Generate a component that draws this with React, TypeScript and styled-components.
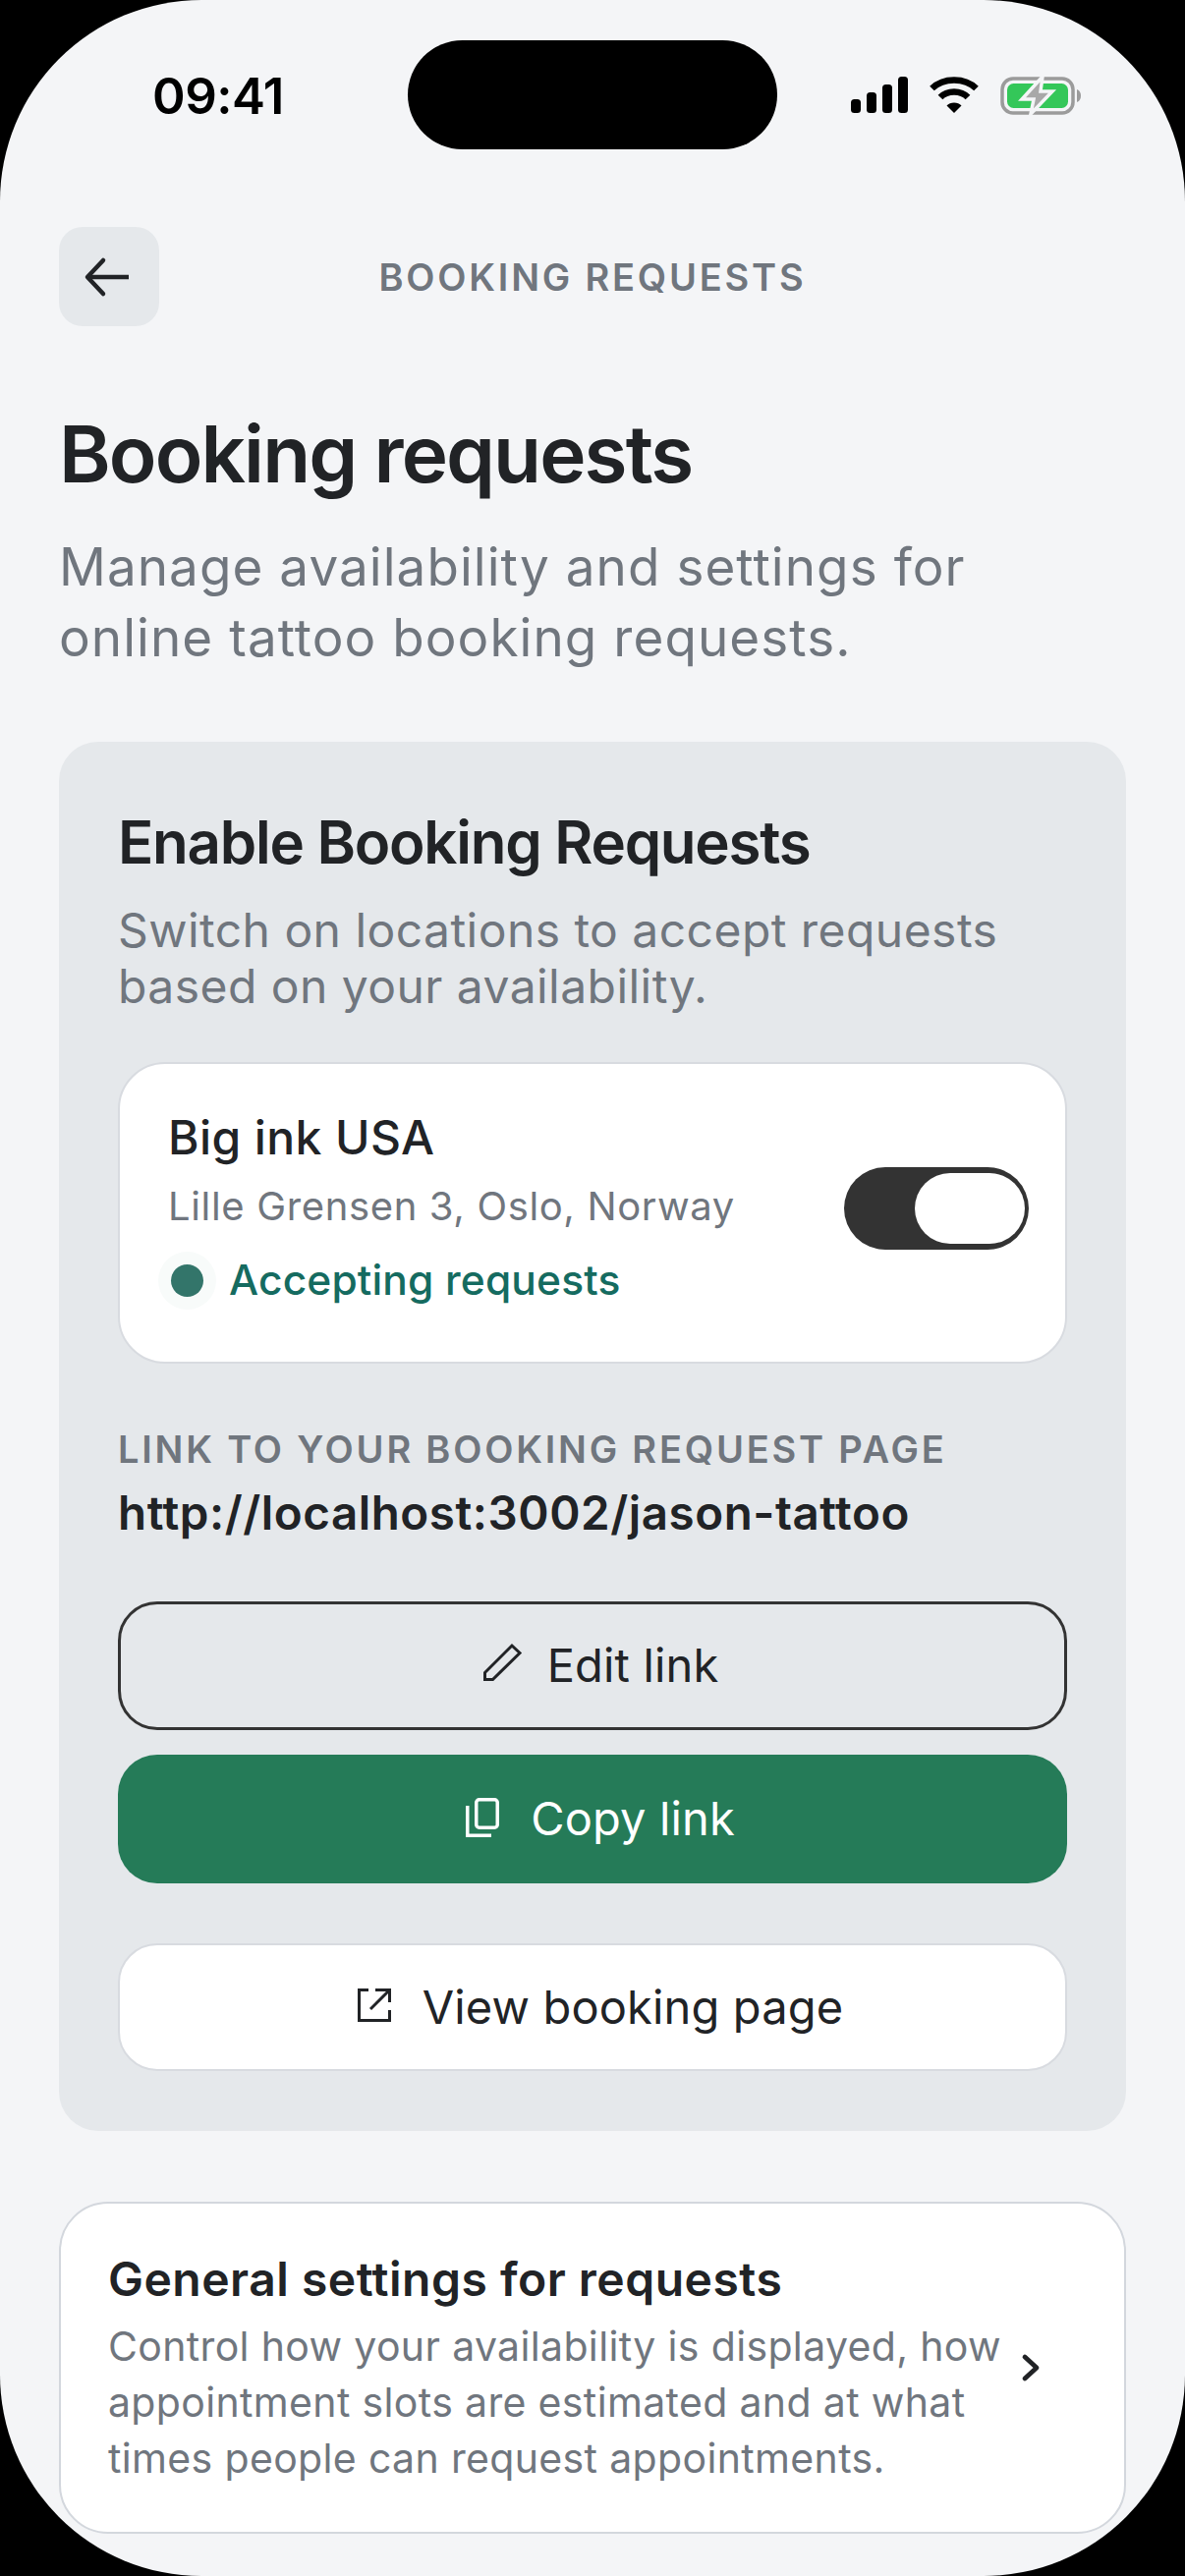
import React from 'react';
import styled, { createGlobalStyle } from 'styled-components';

const GlobalStyle = createGlobalStyle`
  html, body {
    margin: 0;
    padding: 0;
    background: #000;
  }
  * {
    box-sizing: border-box;
  }
`;

const App: React.FC = () => {
  return (
    <>
      <GlobalStyle />
      <Screen>
        <StatusBar>
          <Time>09:41</Time>
          <Island />
          <StatusIcons>
            <svg width="58" height="37" viewBox="0 0 58 37">
              <rect x="0" y="23" width="10" height="14" rx="3.5" fill="#000" />
              <rect x="16" y="16" width="10" height="21" rx="3.5" fill="#000" />
              <rect x="32" y="8" width="10" height="29" rx="3.5" fill="#000" />
              <rect x="48" y="0" width="10" height="37" rx="3.5" fill="#000" />
            </svg>
            <svg width="50" height="37" viewBox="0 0 50 37">
              <path d="M2.5 12 C14 0.5 36 0.5 47.5 12" fill="none" stroke="#000" strokeWidth="6.5" />
              <path d="M11 21 C18 13.5 32 13.5 39 21" fill="none" stroke="#000" strokeWidth="6.5" />
              <path d="M17.5 29.5 C21 25.5 29 25.5 32.5 29.5 L25 37 Z" fill="#000" />
            </svg>
            <svg width="82" height="40" viewBox="0 0 82 40">
              <rect x="2" y="3" width="72" height="35" rx="11" fill="none" stroke="#9B9B9B" strokeWidth="3.5" />
              <rect x="7" y="8" width="62" height="25" rx="6.5" fill="#34C759" />
              <path d="M78 14 C81 15 82 18 82 20.5 C82 23 81 26 78 27 Z" fill="#9B9B9B" />
              <path d="M43 1 L22 24 H34 L31 39 L53 16 H41 Z" fill="#A8A8A8" stroke="#F4F5F7" strokeWidth="3.5" />
            </svg>
          </StatusIcons>
        </StatusBar>

        <TopBar>
          <BackButton>
            <svg width="52" height="52" viewBox="0 0 52 52" fill="none" stroke="#212326" strokeWidth="4.5" strokeLinejoin="round">
              <path d="M46 26 H5" />
              <path d="M20 9 L4 26 L20 43" strokeLinecap="round" />
            </svg>
          </BackButton>
          <TopBarTitle>BOOKING REQUESTS</TopBarTitle>
        </TopBar>

        <PageHeading>Booking requests</PageHeading>
        <PageLead>
          Manage availability and settings for
          <br />
          online tattoo booking requests.
        </PageLead>

        <Panel>
          <PanelTitle>Enable Booking Requests</PanelTitle>
          <PanelLead>
            Switch on locations to accept requests
            <br />
            based on your availability.
          </PanelLead>

          <LocationCard>
            <LocationInfo>
              <LocationName>Big ink USA</LocationName>
              <LocationAddress>Lille Grensen 3, Oslo, Norway</LocationAddress>
              <StatusRow>
                <StatusDot />
                <StatusLabel>Accepting requests</StatusLabel>
              </StatusRow>
            </LocationInfo>
            <Toggle>
              <ToggleKnob />
            </Toggle>
          </LocationCard>

          <LinkLabel>LINK TO YOUR BOOKING REQUEST PAGE</LinkLabel>
          <LinkUrl>http://localhost:3002/jason-tattoo</LinkUrl>

          <OutlineButton>
            <svg width="48" height="48" viewBox="0 0 48 48" fill="none" stroke="#212326" strokeWidth="3">
              <path d="M8.5 31.5 L36 4 L44 11.5 L16.5 38.5 H8.5 Z" />
            </svg>
            Edit link
          </OutlineButton>
          <PrimaryButton>
            <svg width="48" height="48" viewBox="0 0 48 48" fill="none" stroke="#fff" strokeWidth="3.5">
              <rect x="16.75" y="4.75" width="21.5" height="28.5" rx="3" />
              <path d="M7.75 11 V41.25 H32" />
            </svg>
            Copy link
          </PrimaryButton>
          <WhiteButton>
            <svg width="48" height="48" viewBox="0 0 48 48" fill="none" stroke="#212326" strokeWidth="3">
              <path d="M17 7.5 H7.5 V38.5 H38.5 V28" />
              <path d="M19 27 L38.5 7.5" />
              <path d="M24 7.5 H38.5 V20" />
            </svg>
            View booking page
          </WhiteButton>
        </Panel>

        <SettingsCard>
          <SettingsText>
            <SettingsTitle>General settings for requests</SettingsTitle>
            <SettingsLead>
              Control how your availability is displayed, how
              <br />
              appointment slots are estimated and at what
              <br />
              times people can request appointments.
            </SettingsLead>
          </SettingsText>
          <svg width="20" height="30" viewBox="0 0 20 30" fill="none" stroke="#212326" strokeWidth="4.8" strokeLinecap="round" strokeLinejoin="round">
            <path d="M4 4 L16 15 L4 26" />
          </svg>
        </SettingsCard>
      </Screen>
    </>
  );
};

const Screen = styled.div`
  width: 1206px;
  height: 2622px;
  padding: 41px 60px 0;
  overflow: hidden;
  background: #f4f5f7;
  border-radius: 205px;
  font-family: Inter, 'Noto Sans', sans-serif;
  color: #212326;
`;

const StatusBar = styled.div`
  height: 111px;
  display: grid;
  grid-template-columns: 355px 376px 1fr;
  align-items: center;
`;

const Time = styled.div`
  padding: 2px 0 0 95px;
  font-size: 51px;
  font-weight: 600;
  letter-spacing: -0.5px;
  color: #000;
`;

const Island = styled.div`
  height: 111px;
  background: #000;
  border-radius: 56px;
`;

const StatusIcons = styled.div`
  display: flex;
  align-items: center;
  justify-content: flex-end;
  gap: 22px;
  padding-right: 46px;
`;

const TopBar = styled.div`
  position: relative;
  height: 101px;
  margin-top: 79px;
  display: flex;
  align-items: center;
  justify-content: center;
`;

const BackButton = styled.button`
  position: absolute;
  left: 0;
  top: 0;
  width: 102px;
  height: 101px;
  padding: 0;
  display: flex;
  align-items: center;
  justify-content: center;
  border: 0;
  border-radius: 24px;
  background: #e5e8eb;
`;

const TopBarTitle = styled.div`
  font-size: 38px;
  font-weight: 600;
  letter-spacing: 2.8px;
  color: #70767e;
`;

const PageHeading = styled.h1`
  margin: 82px 0 0;
  font-size: 80px;
  line-height: 96px;
  font-weight: 600;
  letter-spacing: -1.9px;
`;

const PageLead = styled.p`
  margin: 31px 0 0;
  font-size: 53px;
  line-height: 72px;
  letter-spacing: 1.05px;
  color: #70767e;
`;

const Panel = styled.section`
  height: 1414px;
  margin-top: 70px;
  padding: 60px;
  background: #e5e8eb;
  border-radius: 40px;
`;

const PanelTitle = styled.h2`
  margin: 0;
  font-size: 60px;
  line-height: 84px;
  font-weight: 600;
  letter-spacing: -1.25px;
`;

const PanelLead = styled.p`
  margin: 19px 0 0;
  font-size: 48px;
  line-height: 57px;
  letter-spacing: 0.45px;
  color: #70767e;
`;

const LocationCard = styled.div`
  height: 307px;
  margin-top: 49px;
  padding: 0 37px 10px 49px;
  display: flex;
  align-items: center;
  justify-content: space-between;
  background: #fff;
  border: 2px solid #d8dbe0;
  border-radius: 48px;
`;

const LocationInfo = styled.div`
  display: flex;
  flex-direction: column;
`;

const LocationName = styled.div`
  font-size: 48px;
  line-height: 60px;
  font-weight: 500;
  letter-spacing: 0.4px;
`;

const LocationAddress = styled.div`
  margin-top: 12px;
  font-size: 40px;
  line-height: 56px;
  letter-spacing: 0.65px;
  color: #70767e;
`;

const StatusRow = styled.div`
  margin-top: 19px;
  display: flex;
  align-items: center;
  gap: 26px;
`;

const StatusDot = styled.span`
  width: 33px;
  height: 33px;
  margin-left: 3px;
  border-radius: 50%;
  background: #33756a;
  box-shadow: 0 0 0 13px #f8fbfa;
`;

const StatusLabel = styled.span`
  font-size: 42.5px;
  line-height: 56px;
  font-weight: 500;
  letter-spacing: 0.15px;
  color: #156b60;
`;

const Toggle = styled.div`
  width: 188px;
  height: 84px;
  padding: 6px 4px;
  display: flex;
  justify-content: flex-end;
  background: #333;
  border-radius: 42px;
`;

const ToggleKnob = styled.div`
  width: 112px;
  height: 72px;
  background: #fff;
  border-radius: 36px;
`;

const LinkLabel = styled.div`
  margin-top: 63px;
  font-size: 38px;
  line-height: 48px;
  font-weight: 600;
  letter-spacing: 2.8px;
  color: #70767e;
`;

const LinkUrl = styled.div`
  margin-top: 13px;
  font-size: 47.5px;
  line-height: 56px;
  font-weight: 600;
  letter-spacing: 0.55px;
`;

const ActionButton = styled.button`
  width: 100%;
  height: 131px;
  padding: 0 0 2px 10px;
  display: flex;
  align-items: center;
  justify-content: center;
  gap: 24px;
  border-radius: 40px;
  font-family: inherit;
  font-size: 47px;
  letter-spacing: 0.15px;
`;

const OutlineButton = styled(ActionButton)`
  margin-top: 62px;
  background: transparent;
  border: 3px solid #333;
  color: #212326;
`;

const PrimaryButton = styled(ActionButton)`
  margin-top: 25px;
  background: #257b58;
  border: 0;
  color: #fff;
`;

const WhiteButton = styled(ActionButton)`
  height: 130px;
  margin-top: 61px;
  background: #fff;
  border: 2px solid #d8dbe0;
  color: #212326;
`;

const SettingsCard = styled.div`
  height: 338px;
  margin-top: 72px;
  padding: 0 85px 0 48px;
  display: flex;
  align-items: center;
  justify-content: space-between;
  background: #fff;
  border: 2px solid #d3d7dd;
  border-radius: 50px;
`;

const SettingsText = styled.div`
  width: 920px;
`;

const SettingsTitle = styled.div`
  font-size: 48px;
  line-height: 60px;
  font-weight: 600;
  letter-spacing: 0.5px;
`;

const SettingsLead = styled.div`
  margin-top: 10px;
  font-size: 41px;
  line-height: 57px;
  letter-spacing: 0.35px;
  color: #70767e;
`;

export default App;
